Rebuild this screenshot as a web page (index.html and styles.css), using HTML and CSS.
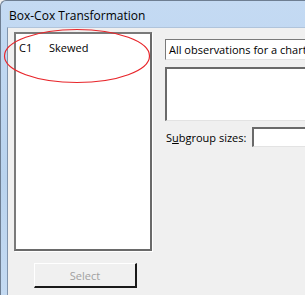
FILE: index.html
```html
<!DOCTYPE html>
<html>
<head>
  <title>Box-Cox Transformation</title>
  <link rel="stylesheet" href="styles.css">
</head>
<body>
  <div class="window">
    <div class="titlebar">Box-Cox Transformation</div>
    <div class="frame">
      <div class="client">
        <div class="left-pane">
          <div class="listbox">
            <div class="list-row"><span class="col-id">C1</span><span>Skewed</span></div>
          </div>
          <button class="select-btn" disabled>Select</button>
        </div>
        <div class="right-pane">
          <div class="combo">All observations for a chart are in one column:</div>
          <div class="textarea"></div>
          <div class="field-row">
            <label class="field-label">S<u>u</u>bgroup sizes:</label>
            <div class="textbox"></div>
          </div>
        </div>
      </div>
    </div>
    <svg class="mark" width="150" height="58" viewBox="0 0 150 58">
      <ellipse cx="75" cy="28" rx="72.5" ry="26.5" fill="none" stroke="#e8262b" stroke-width="1.2"/>
    </svg>
  </div>
</body>
</html>
```

FILE: styles.css
```css
body {
  margin: 0;
  background-color: #f0f0f0;
  font-family: "Open Sans", "Liberation Sans", sans-serif;
  overflow: hidden;
}
.window {
  position: relative;
  width: 304px;
  height: 294px;
  overflow: hidden;
  border-left: 1px solid #6e7e92;
  border-top: 1px solid #6e7e92;
  border-top-left-radius: 6px;
  background: linear-gradient(#c4daf3, #b9d3ee 60%, #c4daf2);
}
.titlebar {
  height: 26px;
  padding-left: 8px;
  font-size: 12px;
  line-height: 30px;
  color: #000;
}
.frame {
  padding-left: 6px;
}
.client {
  display: flex;
  height: 268px;
  background-color: #f0f0f0;
  border-left: 1px solid #8094ad;
  border-top: 1px solid #b0c4db;
}
.left-pane {
  width: 145px;
  flex-shrink: 0;
  padding: 4px 0 0 6px;
}
.listbox {
  width: 134px;
  height: 215px;
  background: #fff;
  border-top: 2px solid #7a7a7a;
  border-left: 2px solid #7a7a7a;
  border-right: 2px solid #6a6a6a;
  border-bottom: 2px solid #6a6a6a;
  box-shadow: 1px 1px 0 #fff;
}
.list-row {
  padding: 6px 0 0 3px;
  font-size: 11px;
  line-height: 15px;
  color: #000;
}
.col-id {
  display: inline-block;
  width: 30px;
}
.select-btn {
  display: block;
  margin: 12px 0 0 20px;
  width: 103px;
  height: 25px;
  padding: 0;
  background: #f0f0f0;
  border-top: 1px solid #fff;
  border-left: 1px solid #fff;
  border-right: 2px solid #1a1a1a;
  border-bottom: 2px solid #1a1a1a;
  font-family: "Open Sans", "Liberation Sans", sans-serif;
  font-size: 11px;
  color: #a0a0a0;
}
.right-pane {
  flex: 1;
  min-width: 0;
  padding: 11px 0 0 6px;
  white-space: nowrap;
  overflow: hidden;
}
.combo {
  height: 19px;
  padding-left: 3px;
  background: #fff;
  border-top: 1px solid #7a7a7a;
  border-left: 1px solid #7a7a7a;
  border-bottom: 1px solid #e3e3e3;
  font-size: 11px;
  line-height: 19px;
  color: #000;
  overflow: hidden;
}
.textarea {
  margin-top: 7px;
  height: 51px;
  background: #fff;
  border-top: 2px solid #6a6a6a;
  border-left: 2px solid #6a6a6a;
  border-bottom: 1px solid #e3e3e3;
}
.field-row {
  display: flex;
  align-items: center;
  margin-top: 6px;
}
.field-label {
  width: 86px;
  flex-shrink: 0;
  padding-left: 1px;
  font-size: 11px;
  color: #000;
}
.textbox {
  flex: 1;
  height: 17px;
  background: #fff;
  border-top: 2px solid #6a6a6a;
  border-left: 2px solid #6a6a6a;
  border-bottom: 1px solid #e3e3e3;
}
.mark {
  position: absolute;
  left: 1px;
  top: 27px;
}
```
